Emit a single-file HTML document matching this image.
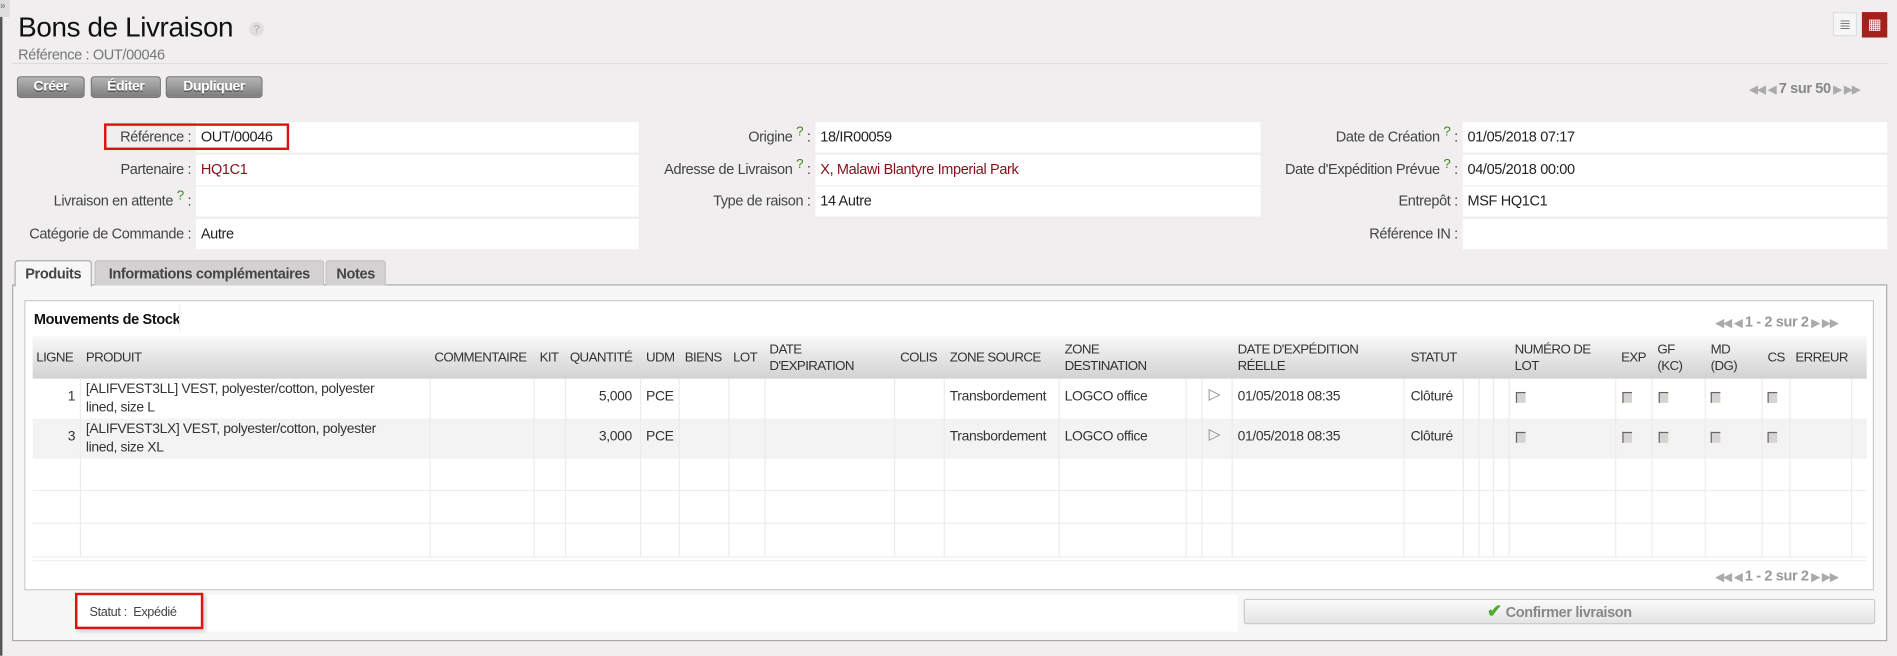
<!DOCTYPE html><html><head><meta charset="utf-8"><style>
html,body{margin:0;padding:0;width:1897px;height:655px;overflow:hidden;background:#f0eeee}
#w{position:absolute;left:0;top:0;width:1568px;height:542px;transform:scale(1.2098);transform-origin:0 0;font-family:"Liberation Sans",sans-serif;font-size:12px;color:#333;letter-spacing:-0.3px}
.a{position:absolute}
.btn{position:absolute;top:63px;height:16px;border:1px solid #777;border-radius:3px;background:linear-gradient(#b5b5b5,#7d7d7d);color:#fff;font-weight:bold;font-size:11.5px;text-align:center;line-height:16px;text-shadow:0 1px 0 #555}
.lab{position:absolute;text-align:right;color:#444;line-height:25px;height:25px}
.val{position:absolute;background:#fff;height:25px;line-height:25px;padding-left:4px;box-sizing:border-box;color:#222}
.q{color:#3a8a1a;font-size:11px;vertical-align:top;position:relative;top:-4px}
.tab{position:absolute;top:215px;height:20px;line-height:20px;background:#d3d1d1;border:1px solid #c4c2c2;border-bottom:none;font-weight:bold;color:#444;text-align:center;border-radius:3px 3px 0 0}
.th{position:absolute;top:278px;height:35px;font-size:11px;color:#333;display:flex;align-items:center;line-height:14px;letter-spacing:-0.5px}
.cell{position:absolute;font-size:11.5px;color:#333}
.cb{position:absolute;width:7px;height:8px;background:#d6d4d0;border-left:1px solid #666;border-top:1px solid #666}
.vl{position:absolute;top:313px;height:147px;width:1px;background:#ececec}
.pg{color:#aaa;font-weight:bold;font-size:9px}
.pg span{font-size:12px}
</style></head><body><div id="w">
<div class="a" style="left:0;top:0;width:2px;height:542px;background:#555"></div>
<div class="a" style="left:0;top:0;width:8px;height:14px;background:#ddd;font-size:8px;color:#666">»</div>
<div class="a" style="left:15px;top:9px;font-size:23px;color:#111">Bons de Livraison</div>
<div class="a" style="left:206px;top:18px;width:12px;height:12px;border-radius:6px;background:#e0dede;color:#aaa;font-size:9px;text-align:center;line-height:12px">?</div>
<div class="a" style="left:15px;top:38px;color:#777;font-size:12px">Référence : OUT/00046</div>
<div class="a" style="left:10px;top:52px;width:1550px;height:1px;background:#ddd"></div>
<div class="btn" style="left:14px;width:54px">Créer</div>
<div class="btn" style="left:75px;width:56px">Éditer</div>
<div class="btn" style="left:137px;width:78px">Dupliquer</div>
<div class="a" style="left:1515px;top:10px;width:20px;height:20px;background:#f6f6f6;border:1px solid #ddd;box-sizing:border-box;color:#777;font-size:12px;text-align:center;line-height:18px">≣</div>
<div class="a" style="left:1539px;top:10px;width:21px;height:21px;background:#a0221b;color:#fff;font-size:12px;text-align:center;line-height:20px">▦</div>
<div class="a pg" style="left:1446px;top:66px">◀◀ ◀ <span style="color:#888">7 sur 50</span> ▶ ▶▶</div>

<div class="lab" style="left:10px;width:148px;top:101px">Référence :</div><div class="val" style="left:162px;width:366px;top:101px">OUT/00046</div>
<div class="a" style="left:86px;top:102px;width:153px;height:22px;border:2px solid #e01010;box-sizing:border-box"></div>
<div class="lab" style="left:10px;width:148px;top:128px">Partenaire :</div><div class="val" style="left:162px;width:366px;top:128px;color:#8b0d1a">HQ1C1</div>
<div class="lab" style="left:10px;width:148px;top:154px">Livraison en attente <span class="q">?</span> :</div><div class="val" style="left:162px;width:366px;top:154px"></div>
<div class="lab" style="left:10px;width:148px;top:181px">Catégorie de Commande :</div><div class="val" style="left:162px;width:366px;top:181px">Autre</div>

<div class="lab" style="left:530px;width:140px;top:101px">Origine <span class="q">?</span> :</div><div class="val" style="left:674px;width:368px;top:101px">18/IR00059</div>
<div class="lab" style="left:520px;width:150px;top:128px">Adresse de Livraison <span class="q">?</span> :</div><div class="val" style="left:674px;width:368px;top:128px;color:#8b0d1a">X, Malawi Blantyre Imperial Park</div>
<div class="lab" style="left:530px;width:140px;top:154px">Type de raison :</div><div class="val" style="left:674px;width:368px;top:154px">14 Autre</div>

<div class="lab" style="left:1030px;width:175px;top:101px">Date de Création <span class="q">?</span> :</div><div class="val" style="left:1209px;width:351px;top:101px">01/05/2018 07:17</div>
<div class="lab" style="left:1030px;width:175px;top:128px">Date d'Expédition Prévue <span class="q">?</span> :</div><div class="val" style="left:1209px;width:351px;top:128px">04/05/2018 00:00</div>
<div class="lab" style="left:1030px;width:175px;top:154px">Entrepôt :</div><div class="val" style="left:1209px;width:351px;top:154px">MSF HQ1C1</div>
<div class="lab" style="left:1030px;width:175px;top:181px">Référence IN :</div><div class="val" style="left:1209px;width:351px;top:181px"></div>

<div class="a" style="left:10px;top:235px;width:1550px;height:295px;background:#f7f7f7;border:1px solid #aaa;box-sizing:border-box"></div>
<div class="tab" style="left:12px;width:62px;background:#f7f7f7;border-color:#aaa;height:21px">Produits</div>
<div class="tab" style="left:78px;width:188px">Informations complémentaires</div>
<div class="tab" style="left:269px;width:48px">Notes</div>

<div class="a" style="left:20px;top:248px;width:1529px;height:240px;background:#fff;border:1px solid #ccc;box-sizing:border-box"></div>
<div class="a" style="left:28px;top:257px;font-weight:bold;font-size:12px;color:#111">Mouvements de Stock</div>
<div class="a" style="left:148px;top:252px;width:1px;height:22px;background:#eee"></div>
<div class="a pg" style="left:1418px;top:259px">◀◀ ◀ <span style="color:#999">1 - 2 sur 2</span> ▶ ▶▶</div>
<div class="a" style="left:27px;top:278px;width:1516px;height:35px;background:linear-gradient(#f8f8f8,#d2d2d2)"></div>
<div class="th" style="left:30px">LIGNE</div>
<div class="th" style="left:71px">PRODUIT</div>
<div class="th" style="left:359px">COMMENTAIRE</div>
<div class="th" style="left:446px">KIT</div>
<div class="th" style="left:471px">QUANTITÉ</div>
<div class="th" style="left:534px">UDM</div>
<div class="th" style="left:566px">BIENS</div>
<div class="th" style="left:606px">LOT</div>
<div class="th" style="left:636px">DATE<br>D'EXPIRATION</div>
<div class="th" style="left:744px">COLIS</div>
<div class="th" style="left:785px">ZONE SOURCE</div>
<div class="th" style="left:880px">ZONE<br>DESTINATION</div>
<div class="th" style="left:1023px">DATE D'EXPÉDITION<br>RÉELLE</div>
<div class="th" style="left:1166px">STATUT</div>
<div class="th" style="left:1252px">NUMÉRO DE<br>LOT</div>
<div class="th" style="left:1340px">EXP</div>
<div class="th" style="left:1370px">GF<br>(KC)</div>
<div class="th" style="left:1414px">MD<br>(DG)</div>
<div class="th" style="left:1461px">CS</div>
<div class="th" style="left:1484px">ERREUR</div>

<div class="a" style="left:27px;top:346px;width:1516px;height:32px;background:#f3f3f3"></div>
<div class="a" style="left:27px;top:378px;width:1516px;height:1px;background:#eee"></div>
<div class="a" style="left:27px;top:405px;width:1516px;height:1px;background:#eee"></div>
<div class="a" style="left:27px;top:432px;width:1516px;height:1px;background:#eee"></div>
<div class="a" style="left:27px;top:460px;width:1516px;height:1px;background:#eee"></div>
<div class="vl" style="left:66px"></div><div class="vl" style="left:355px"></div><div class="vl" style="left:441px"></div><div class="vl" style="left:467px"></div><div class="vl" style="left:529px"></div><div class="vl" style="left:561px"></div><div class="vl" style="left:602px"></div><div class="vl" style="left:632px"></div><div class="vl" style="left:739px"></div><div class="vl" style="left:780px"></div><div class="vl" style="left:875px"></div><div class="vl" style="left:980px"></div><div class="vl" style="left:993px"></div><div class="vl" style="left:1018px"></div><div class="vl" style="left:1160px"></div><div class="vl" style="left:1209px"></div><div class="vl" style="left:1222px"></div><div class="vl" style="left:1234px"></div><div class="vl" style="left:1247px"></div><div class="vl" style="left:1335px"></div><div class="vl" style="left:1365px"></div><div class="vl" style="left:1409px"></div><div class="vl" style="left:1456px"></div><div class="vl" style="left:1479px"></div><div class="vl" style="left:1530px"></div>

<div class="cell" style="left:56px;top:322px">1</div>
<div class="cell" style="left:71px;top:315px;line-height:15px">[ALIFVEST3LL] VEST, polyester/cotton, polyester<br>lined, size L</div>
<div class="cell" style="left:495px;top:322px">5,000</div><div class="cell" style="left:534px;top:322px">PCE</div>
<div class="cell" style="left:785px;top:322px">Transbordement</div><div class="cell" style="left:880px;top:322px">LOGCO office</div>
<div class="cell" style="left:999px;top:318px;color:#888;font-size:13px">▷</div>
<div class="cell" style="left:1023px;top:322px">01/05/2018 08:35</div><div class="cell" style="left:1166px;top:322px">Clôturé</div>
<div class="cell" style="left:56px;top:355px">3</div>
<div class="cell" style="left:71px;top:348px;line-height:15px">[ALIFVEST3LX] VEST, polyester/cotton, polyester<br>lined, size XL</div>
<div class="cell" style="left:495px;top:355px">3,000</div><div class="cell" style="left:534px;top:355px">PCE</div>
<div class="cell" style="left:785px;top:355px">Transbordement</div><div class="cell" style="left:880px;top:355px">LOGCO office</div>
<div class="cell" style="left:999px;top:351px;color:#888;font-size:13px">▷</div>
<div class="cell" style="left:1023px;top:355px">01/05/2018 08:35</div><div class="cell" style="left:1166px;top:355px">Clôturé</div>
<div class="cb" style="left:1253px;top:324px"></div><div class="cb" style="left:1341px;top:324px"></div><div class="cb" style="left:1371px;top:324px"></div><div class="cb" style="left:1414px;top:324px"></div><div class="cb" style="left:1461px;top:324px"></div>
<div class="cb" style="left:1253px;top:357px"></div><div class="cb" style="left:1341px;top:357px"></div><div class="cb" style="left:1371px;top:357px"></div><div class="cb" style="left:1414px;top:357px"></div><div class="cb" style="left:1461px;top:357px"></div>
<div class="a" style="left:27px;top:463px;width:1516px;height:1px;background:#eee"></div>
<div class="a pg" style="left:1418px;top:469px">◀◀ ◀ <span style="color:#999">1 - 2 sur 2</span> ▶ ▶▶</div>

<div class="a" style="left:65px;top:492px;width:958px;height:30px;background:#fff"></div>
<div class="a" style="left:62px;top:490px;width:106px;height:30px;border:2px solid #e01010;box-sizing:border-box;box-shadow:2px 2px 3px rgba(0,0,0,.2)"></div>
<div class="a" style="left:74px;top:500px;font-size:10.5px;color:#444">Statut :&nbsp; Expédié</div>
<div class="a" style="left:1028px;top:495px;width:522px;height:21px;border:1px solid #ccc;border-radius:2px;background:linear-gradient(#fafafa,#e4e4e4);box-sizing:border-box;text-align:center;line-height:20px;font-weight:bold;color:#888"><span style="color:#4cae2c;font-size:15px">✔</span> Confirmer livraison</div>
</div></body></html>
